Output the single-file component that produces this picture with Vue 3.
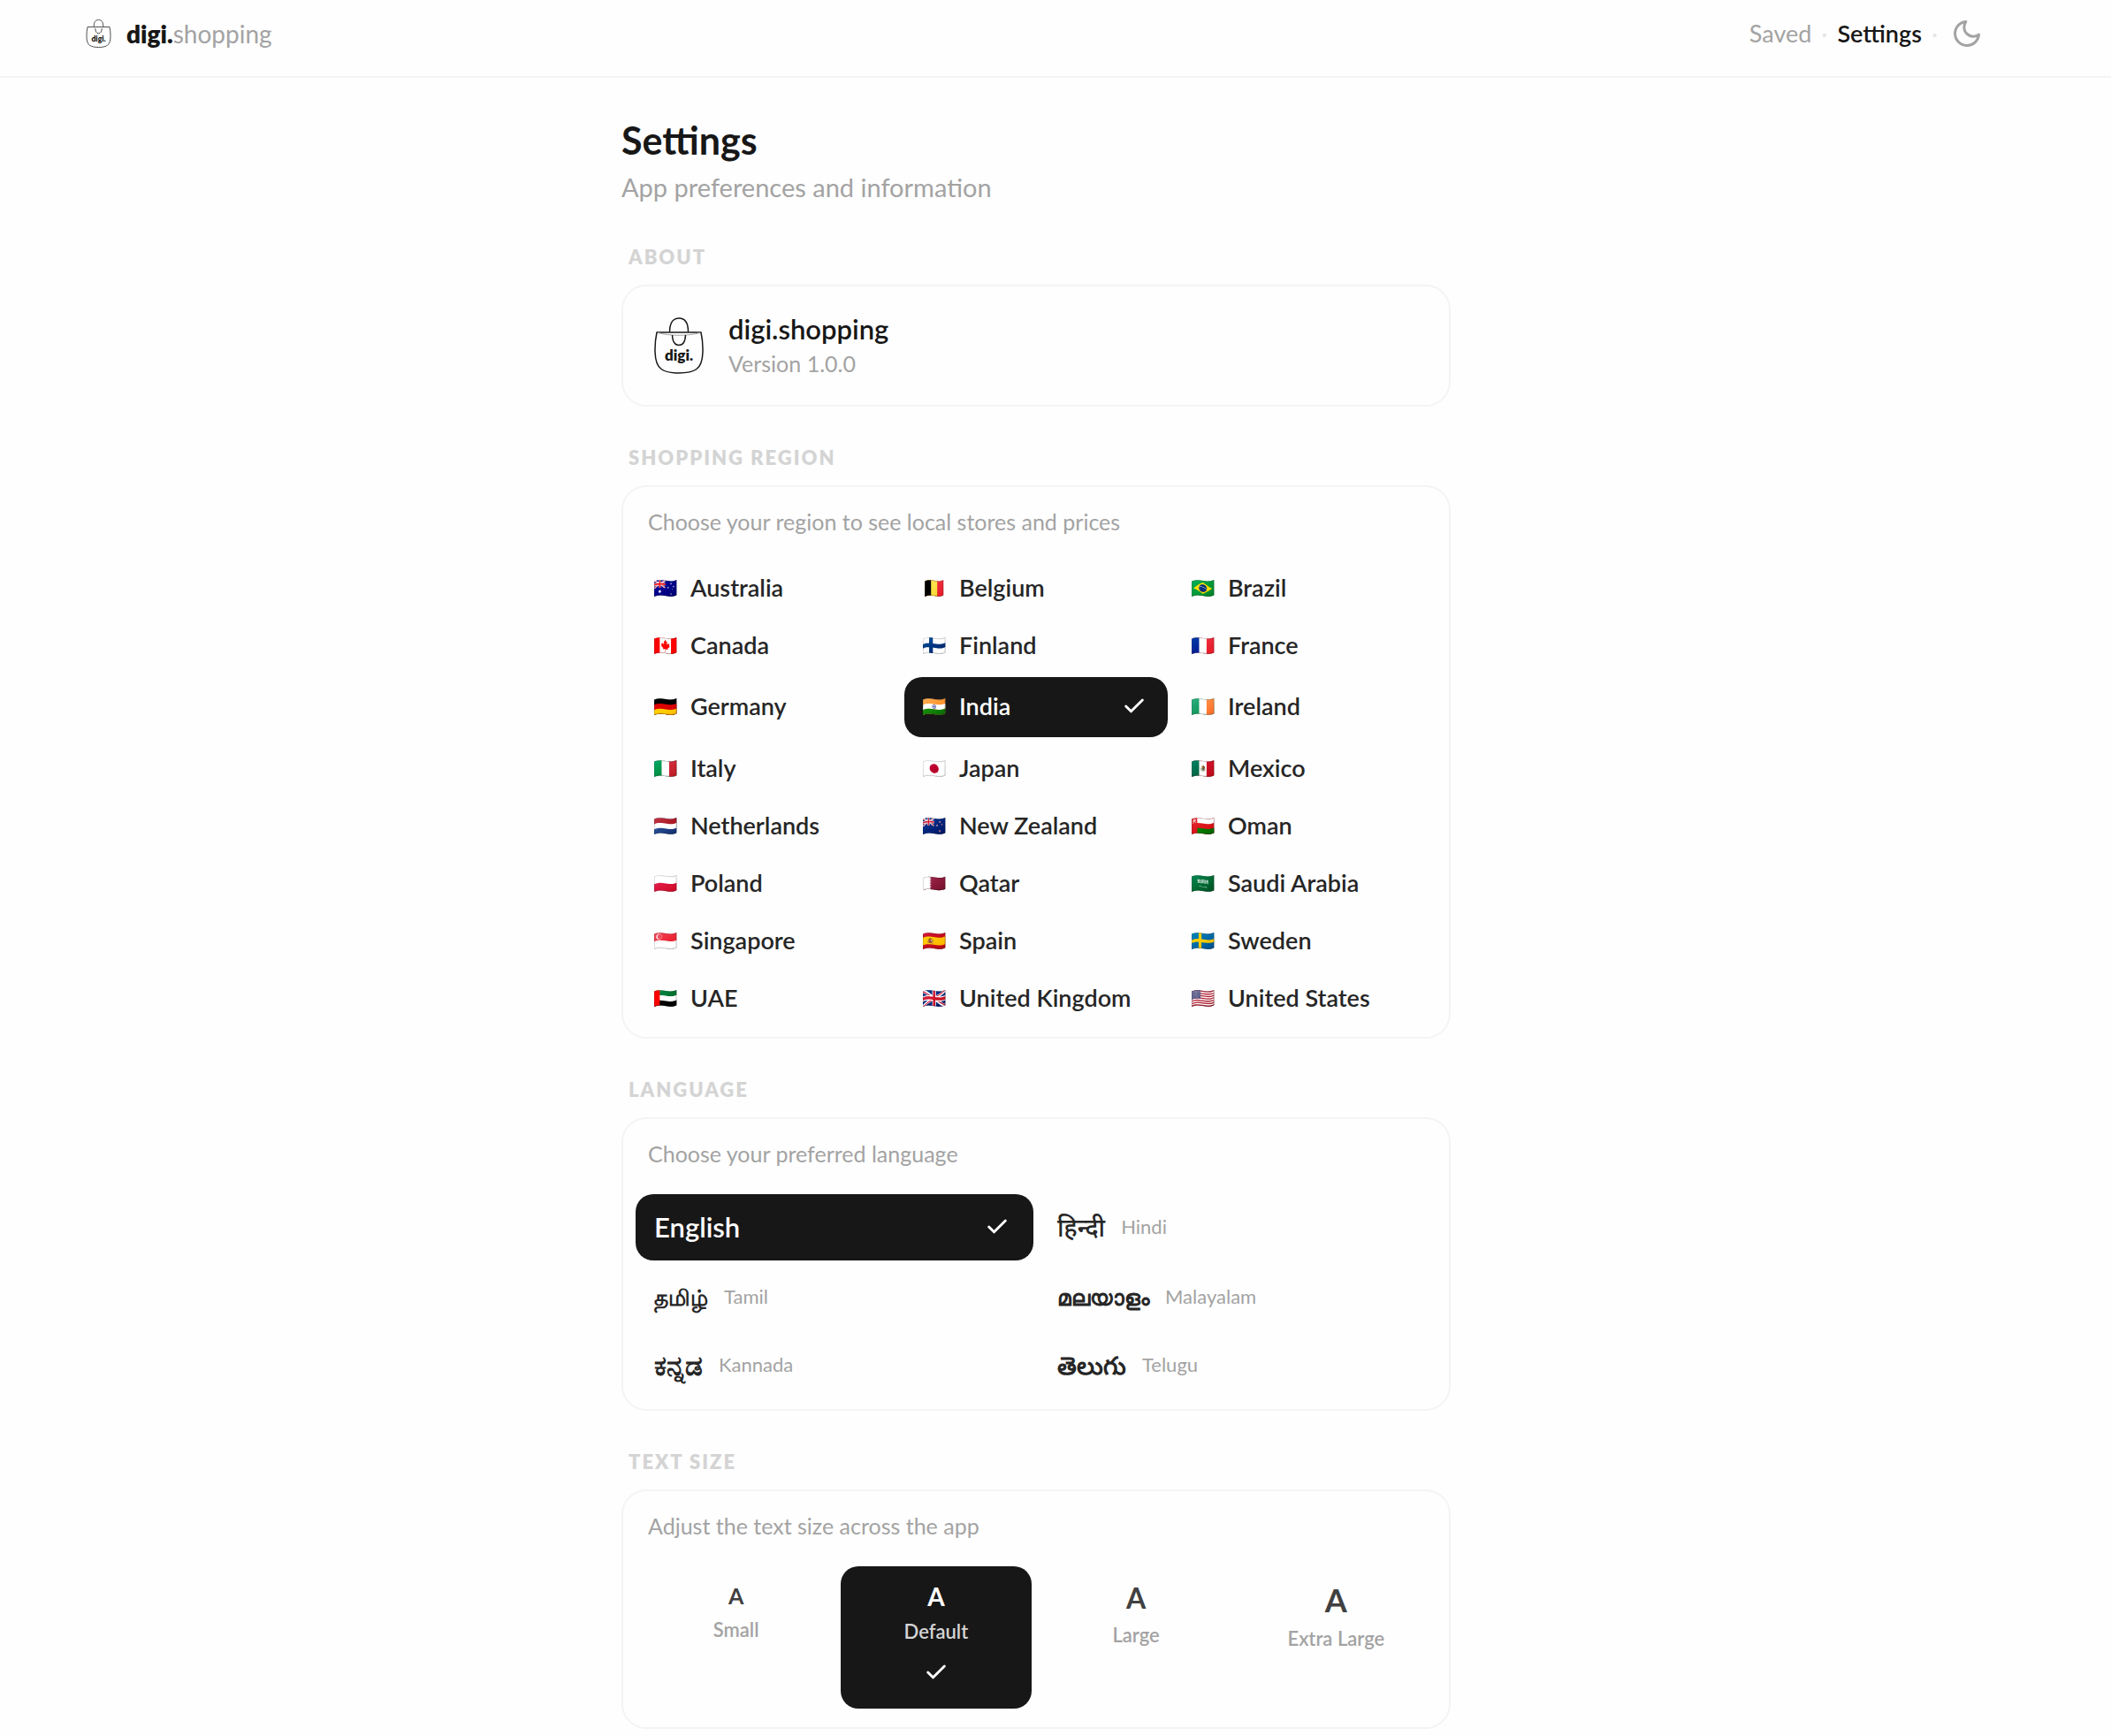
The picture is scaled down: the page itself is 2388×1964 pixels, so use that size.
<template>
  <div class="page">
    <!-- Top bar -->
    <header class="header">
      <a href="#" class="brand">
        <svg class="brand-logo" viewBox="0 0 56 64" aria-hidden="true">
          <path class="bag-line" d="M17.500 16.500C17.500 6 20.500 1 28 1s10.500 5 10.500 15.500" />
          <path class="bag-line" d="M3 17h50c1.500 7 2.200 14 2 22-.3 10-2 16-7 19.500-4 3-11 4.500-20 4.500s-16-1.500-20-4.500C3 55 1.300 49 1 39c-.2-8 .5-15 2-22z" />
          <path class="bag-line" d="M20.500 20c.3 7 2.500 11.500 7.500 11.500s7.200-4.500 7.500-11.500" />
          <text class="bag-text" x="28" y="49" text-anchor="middle">digi.</text>
        </svg>
        <span class="brand-name"><strong>digi.</strong>shopping</span>
      </a>
      <nav class="nav" aria-label="Main">
        <a href="#saved">Saved</a>
        <span class="dot" aria-hidden="true">·</span>
        <a href="#settings" class="active" aria-current="page">Settings</a>
        <span class="dot" aria-hidden="true">·</span>
        <button type="button" class="theme-btn" aria-label="Toggle dark mode">
          <svg viewBox="0 0 24 24" aria-hidden="true">
            <path d="M21 12.790A9 9 0 1 1 11.210 3 7 7 0 0 0 21 12.790z" />
          </svg>
        </button>
      </nav>
    </header>

    <main class="settings">
      <h1>Settings</h1>
      <p class="subtitle">App preferences and information</p>

      <section>
        <h2>About</h2>
        <div class="card about">
          <svg class="about-logo" viewBox="0 0 56 64" aria-hidden="true">
            <path class="bag-line" d="M17.500 16.500C17.500 6 20.500 1 28 1s10.500 5 10.500 15.500" />
            <path class="bag-line" d="M3 17h50c1.500 7 2.200 14 2 22-.3 10-2 16-7 19.500-4 3-11 4.500-20 4.500s-16-1.500-20-4.500C3 55 1.300 49 1 39c-.2-8 .5-15 2-22z" />
            <path class="bag-fold" d="M4 17.500c7 1.800 15 2.800 24 2.800s17-1 24-2.800" />
            <path class="bag-line" d="M20.500 20c.3 7 2.500 11.500 7.500 11.500s7.200-4.500 7.500-11.500" />
            <text class="bag-text" x="28" y="49" text-anchor="middle">digi.</text>
          </svg>
          <div>
            <p class="app-name">digi.shopping</p>
            <p class="app-version">Version 1.0.0</p>
          </div>
        </div>
      </section>

      <section>
        <h2>Shopping Region</h2>
        <div class="card">
          <p class="hint">Choose your region to see local stores and prices</p>
          <div class="regions">
            <button
              v-for="r in regions"
              :key="r.name"
              type="button"
              class="option region"
              :class="{ selected: r.name === region }"
              :aria-pressed="r.name === region"
              @click="region = r.name"
            >
              <span class="flag" aria-hidden="true">{{ r.flag }}</span>
              <span class="region-name">{{ r.name }}</span>
              <svg v-if="r.name === region" class="check" viewBox="0 0 24 24" aria-hidden="true">
                <path d="M20 6 9 17l-5-5" />
              </svg>
            </button>
          </div>
        </div>
      </section>

      <section>
        <h2>Language</h2>
        <div class="card">
          <p class="hint">Choose your preferred language</p>
          <div class="languages">
            <button
              v-for="l in languages"
              :key="l.code"
              type="button"
              class="option language"
              :class="{ selected: l.code === language }"
              :aria-pressed="l.code === language"
              @click="language = l.code"
            >
              <span class="native" :lang="l.code">{{ l.native }}</span>
              <span v-if="l.code !== 'en'" class="english">{{ l.name }}</span>
              <svg v-if="l.code === language" class="check" viewBox="0 0 24 24" aria-hidden="true">
                <path d="M20 6 9 17l-5-5" />
              </svg>
            </button>
          </div>
        </div>
      </section>

      <section>
        <h2>Text Size</h2>
        <div class="card">
          <p class="hint">Adjust the text size across the app</p>
          <div class="sizes">
            <button
              v-for="s in sizes"
              :key="s.id"
              type="button"
              class="option size"
              :class="[s.id, { selected: s.id === textSize }]"
              :aria-pressed="s.id === textSize"
              @click="textSize = s.id"
            >
              <span class="letter">A</span>
              <span class="size-name">{{ s.label }}</span>
              <svg v-if="s.id === textSize" class="check" viewBox="0 0 24 24" aria-hidden="true">
                <path d="M20 6 9 17l-5-5" />
              </svg>
            </button>
          </div>
        </div>
      </section>
    </main>
  </div>
</template>

<script setup>
import { ref } from 'vue'

const region = ref('India')
const language = ref('en')
const textSize = ref('default')

const regions = [
  { flag: '🇦🇺', name: 'Australia' },
  { flag: '🇧🇪', name: 'Belgium' },
  { flag: '🇧🇷', name: 'Brazil' },
  { flag: '🇨🇦', name: 'Canada' },
  { flag: '🇫🇮', name: 'Finland' },
  { flag: '🇫🇷', name: 'France' },
  { flag: '🇩🇪', name: 'Germany' },
  { flag: '🇮🇳', name: 'India' },
  { flag: '🇮🇪', name: 'Ireland' },
  { flag: '🇮🇹', name: 'Italy' },
  { flag: '🇯🇵', name: 'Japan' },
  { flag: '🇲🇽', name: 'Mexico' },
  { flag: '🇳🇱', name: 'Netherlands' },
  { flag: '🇳🇿', name: 'New Zealand' },
  { flag: '🇴🇲', name: 'Oman' },
  { flag: '🇵🇱', name: 'Poland' },
  { flag: '🇶🇦', name: 'Qatar' },
  { flag: '🇸🇦', name: 'Saudi Arabia' },
  { flag: '🇸🇬', name: 'Singapore' },
  { flag: '🇪🇸', name: 'Spain' },
  { flag: '🇸🇪', name: 'Sweden' },
  { flag: '🇦🇪', name: 'UAE' },
  { flag: '🇬🇧', name: 'United Kingdom' },
  { flag: '🇺🇸', name: 'United States' }
]

const languages = [
  { code: 'en', native: 'English', name: 'English' },
  { code: 'hi', native: 'हिन्दी', name: 'Hindi' },
  { code: 'ta', native: 'தமிழ்', name: 'Tamil' },
  { code: 'ml', native: 'മലയാളം', name: 'Malayalam' },
  { code: 'kn', native: 'ಕನ್ನಡ', name: 'Kannada' },
  { code: 'te', native: 'తెలుగు', name: 'Telugu' }
]

const sizes = [
  { id: 'small', label: 'Small' },
  { id: 'default', label: 'Default' },
  { id: 'large', label: 'Large' },
  { id: 'xlarge', label: 'Extra Large' }
]
</script>

<style>
body {
  margin: 0;
  background: #fefefe;
}
</style>

<style scoped>
.page {
  min-height: 100vh;
  font-family: Lato, 'Noto Sans', sans-serif;
  color: #171717;
}
h1, h2, p { margin: 0; }
button {
  font-family: inherit;
  border: none;
  background: none;
  cursor: pointer;
}
a { text-decoration: none; }

/* Top bar */
.header {
  display: flex;
  justify-content: space-between;
  align-items: center;
  padding: 16px 141px 26px 97px;
  border-bottom: 2px solid #f4f4f4;
}
.brand {
  display: flex;
  align-items: center;
  gap: 17px;
  color: #a3a3a3;
}
.brand-logo { width: 29px; height: 32px; }
.brand-name {
  font-size: 28px;
  line-height: 44px;
}
.brand-name strong {
  font-weight: 800;
  color: #171717;
}
.nav {
  display: flex;
  align-items: center;
  gap: 11px;
  font-size: 27px;
  line-height: 44px;
}
.nav a { color: #a3a3a3; }
.nav a.active {
  color: #171717;
  font-weight: 600;
}
.dot { color: #e5e5e5; }
.theme-btn {
  display: flex;
  padding: 4px;
}
.theme-btn svg {
  width: 36px;
  height: 36px;
  fill: none;
  stroke: #a3a3a3;
  stroke-width: 2;
  stroke-linecap: round;
  stroke-linejoin: round;
}

/* Shopping bag logo */
.bag-line {
  fill: none;
  stroke: #171717;
  stroke-width: 1.5;
  stroke-linejoin: round;
}
.bag-fold {
  fill: none;
  stroke: #a3a3a3;
  stroke-width: 1;
}
.bag-text {
  font-size: 17px;
  font-weight: 800;
  fill: #171717;
}

.settings {
  max-width: 938px;
  margin: 0 auto;
  padding: 46px 44px 7px 0;
}
h1 {
  font-size: 43px;
  line-height: 50px;
  font-weight: 700;
}
.subtitle {
  margin-top: 7px;
  font-size: 29px;
  line-height: 42px;
  color: #a3a3a3;
}
section { margin-top: 44px; }
h2 {
  margin-bottom: 17px;
  padding-left: 8px;
  font-size: 22px;
  line-height: 28px;
  font-weight: 800;
  letter-spacing: 2px;
  text-transform: uppercase;
  color: #d4d4d4;
}
.card {
  border: 2px solid #f4f4f4;
  border-radius: 28px;
}
.hint {
  padding: 22px 28px 29px;
  font-size: 25px;
  line-height: 34px;
  color: #a3a3a3;
}

/* About */
.about {
  display: flex;
  align-items: center;
  gap: 28px;
  padding: 28px 35px;
}
.about-logo { width: 56px; height: 64px; }
.app-name {
  font-size: 31px;
  line-height: 40px;
  font-weight: 600;
}
.app-version {
  font-size: 25px;
  line-height: 38px;
  color: #a3a3a3;
}

/* Options */
.option {
  border-radius: 20px;
  color: #262626;
  text-align: left;
}
.option.selected {
  background: #171717;
  color: #fff;
}
.check {
  flex: none;
  width: 28px;
  height: 28px;
  fill: none;
  stroke: #fff;
  stroke-width: 2.5;
  stroke-linecap: round;
  stroke-linejoin: round;
}
.regions {
  display: grid;
  grid-template-columns: repeat(3, 1fr);
  gap: 6px;
  padding: 0 14px 14px;
}
.region {
  display: flex;
  align-items: center;
  gap: 16px;
  min-height: 59px;
  padding: 0 24px 2px 20px;
  font-size: 27px;
  line-height: 34px;
  font-weight: 600;
}
.region.selected { min-height: 68px; }
.flag {
  width: 26px;
  font-size: 22px;
  line-height: 34px;
}
.region-name { flex: 1; }

.languages {
  display: grid;
  grid-template-columns: repeat(2, 1fr);
  gap: 6px;
  padding: 0 14px 14px;
}
.language {
  display: flex;
  align-items: center;
  gap: 18px;
  min-height: 71px;
  padding: 0 27px 2px 21px;
}
.language.selected {
  justify-content: space-between;
  min-height: 75px;
}
.native {
  font-size: 28px;
  line-height: 42px;
  font-weight: 600;
}
.native:lang(en),
.native:lang(kn) { font-size: 31px; }
.native:lang(hi) { font-weight: 500; }
.native:lang(ta),
.native:lang(ml) { font-size: 25px; }
.english {
  font-size: 22px;
  line-height: 28px;
  color: #a3a3a3;
}

.sizes {
  display: grid;
  grid-template-columns: repeat(4, 1fr);
  gap: 11px;
  padding: 0 20px 21px;
}
.size {
  display: flex;
  flex-direction: column;
  align-items: center;
  padding: 16px 0 27px;
}
.letter {
  margin-bottom: 8px;
  font-weight: 700;
  color: #404040;
}
.small .letter { font-size: 25px; line-height: 34px; }
.default .letter { font-size: 28px; line-height: 36px; }
.large .letter { font-size: 32px; line-height: 40px; }
.xlarge .letter { font-size: 36px; line-height: 44px; }
.size-name {
  font-size: 22px;
  line-height: 28px;
  font-weight: 600;
  color: #a3a3a3;
}
.size.selected .letter { color: #fff; }
.size.selected .size-name { color: #d4d4d4; }
.size .check { margin-top: 18px; }

@media (max-width: 1100px) {
  .header { padding: 16px 24px 26px; }
  .settings { padding: 46px 24px 24px; }
  .regions { grid-template-columns: repeat(2, 1fr); }
  .sizes { grid-template-columns: repeat(2, 1fr); }
}
</style>
